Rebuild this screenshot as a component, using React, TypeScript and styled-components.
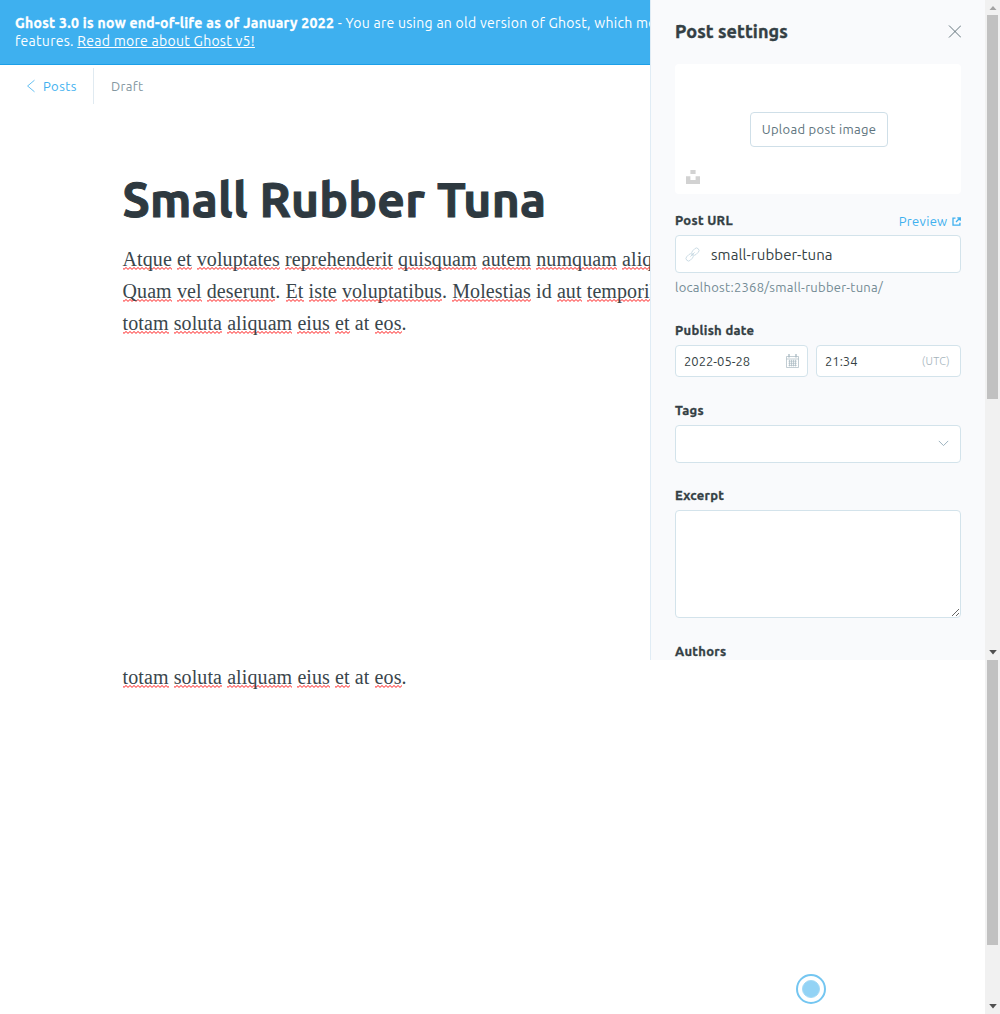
import React from "react";
import styled, { createGlobalStyle } from "styled-components";

const GlobalStyle = createGlobalStyle`
  *, *::before, *::after { box-sizing: border-box; }
  body {
    margin: 0;
    background: #fff;
    color: #343f44;
    font-family: Ubuntu, "Open Sans", "Noto Sans", sans-serif;
    font-size: 13px;
    line-height: 16px;
    letter-spacing: 0.3px;
  }
`;

const Page = styled.div`
  display: flex;
  flex-direction: column;
  width: 1000px;
  height: 1014px;
  overflow: hidden;
`;

const Screen = styled.div<{ $height: number }>`
  display: flex;
  height: ${(p) => p.$height}px;
  overflow: hidden;
`;

const Main = styled.main`
  flex: 1;
  min-width: 0;
  overflow: hidden;
`;

const Banner = styled.div`
  height: 65px;
  padding: 14px 15px;
  border-bottom: 1px solid #1c9fe8;
  background: #3eb0ef;
  color: #fff;
  font-size: 14px;
  line-height: 18px;
  letter-spacing: 0.28px;
  white-space: nowrap;
`;

const BannerStrong = styled.b`
  letter-spacing: 0.3px;
  -webkit-text-stroke: 0.3px currentColor;
`;

const BannerLink = styled.a`
  color: inherit;
  text-decoration: underline;
`;

const EditorHeader = styled.header`
  display: flex;
  height: 39px;
  padding: 3px 0 0 26px;
`;

const BackLink = styled.a`
  display: flex;
  align-items: center;
  gap: 7px;
  width: 68px;
  border-right: 1px solid #e0eaf1;
  color: #3eb0ef;
  letter-spacing: 0.45px;
`;

const Status = styled.div`
  display: flex;
  align-items: center;
  padding-left: 17px;
  color: #8497a1;
`;

const Article = styled.article<{ $top: number }>`
  padding: ${(p) => p.$top}px 0 0 122.5px;
`;

const Title = styled.h1`
  margin: 0 0 14px;
  color: #2e3940;
  font-size: 48px;
  font-weight: 700;
  line-height: 60px;
  white-space: nowrap;
  -webkit-text-stroke: 1px currentColor;
`;

const Paragraph = styled.p`
  margin: 0;
  color: #3a464c;
  font-family: "Liberation Serif", serif;
  font-size: 20px;
  line-height: 32px;
  letter-spacing: 0.1px;
  white-space: nowrap;
`;

const Misspelled = styled.span`
  background: url("data:image/svg+xml,%3Csvg xmlns='http://www.w3.org/2000/svg' width='4' height='3'%3E%3Cpath d='M-1 .5L1 2.4L3 .5L5 2.4' fill='none' stroke='%23f22' stroke-width='1'/%3E%3C/svg%3E")
    left bottom / 4px 3px repeat-x;
`;

const Panel = styled.aside`
  display: flex;
  flex-direction: column;
  flex: none;
  width: 335px;
  padding: 0 24px;
  overflow: hidden;
  border-left: 1px solid #e0ecf5;
  background: #f9fafc;
`;

const PanelHeader = styled.div`
  display: flex;
  flex: none;
  align-items: center;
  justify-content: space-between;
  height: 62px;
  margin-bottom: 2px;
`;

const PanelTitle = styled.h4`
  margin: 0;
  font-size: 18px;
  font-weight: 700;
  line-height: 22px;
  letter-spacing: 0.1px;
  -webkit-text-stroke: 0.4px currentColor;
`;

const ImageDrop = styled.div`
  display: grid;
  flex: none;
  grid-template-rows: 1fr 35px 1fr;
  height: 130px;
  margin-bottom: 18px;
  border-radius: 4px;
  background: #fff;
`;

const UploadButton = styled.button`
  grid-row: 2;
  justify-self: center;
  width: 138px;
  margin-left: 2px;
  padding: 0;
  border: 1px solid #cfdfe8;
  border-radius: 4px;
  background: #fff;
  color: #5d737d;
  font: inherit;
  letter-spacing: inherit;
`;

const UnsplashMark = styled.div`
  display: flex;
  grid-row: 3;
  align-items: flex-end;
  padding: 0 0 10px 11px;
`;

const Field = styled.div<{ $gap: number }>`
  flex: none;
  margin-bottom: ${(p) => p.$gap}px;
`;

const LabelRow = styled.div`
  display: flex;
  justify-content: space-between;
  margin-bottom: 7px;
`;

const Label = styled.label`
  font-weight: 700;
  -webkit-text-stroke: 0.3px currentColor;
`;

const PreviewLink = styled.a`
  display: flex;
  align-items: center;
  gap: 4px;
  height: 18px;
  margin: 0 0.5px -2px 0;
  color: #3eb0ef;
`;

const InputBox = styled.div<{ $height: number; $width?: number }>`
  display: flex;
  align-items: center;
  justify-content: space-between;
  width: ${(p) => (p.$width ? `${p.$width}px` : "100%")};
  height: ${(p) => p.$height}px;
  padding: 0 8px;
  border: 1px solid #d3e3eb;
  border-radius: 4px;
  background: #fff;
`;

const UrlBox = styled(InputBox)`
  justify-content: flex-start;
  gap: 11px;
  padding-left: 9px;
  font-size: 15px;
  letter-spacing: 0.1px;
`;

const UrlValue = styled.span`
  padding-top: 2px;
`;

const SmallValue = styled.span`
  letter-spacing: 0;
`;

const Timezone = styled.span`
  padding-right: 2px;
  color: #a5b3bb;
  font-size: 11px;
  font-weight: 300;
`;

const Helper = styled.p`
  margin: 6px 0 0;
  color: #738a94;
  letter-spacing: 0.28px;
`;

const DateRow = styled.div`
  display: flex;
  gap: 8px;
`;

const ExcerptArea = styled.textarea`
  display: block;
  width: 100%;
  height: 108px;
  border: 1px solid #d3e3eb;
  border-radius: 4px;
  outline: none;
  background: #fff;
  resize: vertical;
`;

const Track = styled.div`
  display: flex;
  flex: none;
  flex-direction: column;
  width: 15px;
  padding: 0 2px;
  background: #f1f1f1;
`;

const ThumbBar = styled.div<{ $height: number }>`
  height: ${(p) => p.$height}px;
  background: #c1c1c1;
`;

const TrackEnd = styled.div<{ $bottom?: boolean }>`
  display: flex;
  justify-content: center;
  height: 15px;
  padding-top: 5px;
  margin-top: ${(p) => (p.$bottom ? "auto" : "0")};
`;

const Pointer = styled.div`
  position: absolute;
  left: 796px;
  top: 974px;
  display: grid;
  place-items: center;
  width: 30px;
  height: 30px;
  border: 2px solid #74c6f1;
  border-radius: 50%;
  background: #fff;

  &::after {
    content: "";
    width: 18px;
    height: 18px;
    border: 1px solid #a3daf6;
    border-radius: 50%;
    background: #93d3f5;
  }
`;

function Scrollbar({ top, thumb }: { top: boolean; thumb: number }) {
  return (
    <Track>
      {top && (
        <TrackEnd>
          <svg width="8" height="5" viewBox="0 0 8 5">
            <path d="M0.5 5L4 1l3.5 4z" fill="#a3a3a3" />
          </svg>
        </TrackEnd>
      )}
      <ThumbBar $height={thumb} />
      <TrackEnd $bottom>
        <svg width="8" height="5" viewBox="0 0 8 5">
          <path d="M0.2 0h7.6L4 4.5z" fill="#505050" />
        </svg>
      </TrackEnd>
    </Track>
  );
}

function Prose({ text }: { text: string }) {
  const known = ["id", "at"];
  return (
    <>
      {text.split(" ").map((word, i) => {
        const body = word.replace(/\.$/, "");
        return (
          <React.Fragment key={i}>
            {i > 0 && " "}
            {known.includes(body) ? body : <Misspelled>{body}</Misspelled>}
            {word !== body && "."}
          </React.Fragment>
        );
      })}
    </>
  );
}

const LAST_LINE = "totam soluta aliquam eius et at eos.";

export default function App() {
  return (
    <Page>
      <GlobalStyle />
      <Screen $height={660}>
        <Main>
          <Banner>
            <BannerStrong>Ghost 3.0 is now end-of-life as of January 2022</BannerStrong> - You are using an old
            version of Ghost, which means
            <br />
            features. <BannerLink>Read more about Ghost v5!</BannerLink>
          </Banner>
          <EditorHeader>
            <BackLink>
              <svg width="10" height="14" viewBox="0 0 10 14" fill="none" stroke="#3eb0ef" strokeWidth="0.8">
                <path d="M8.5 1.2L1.6 7l6.9 5.8" />
              </svg>
              Posts
            </BackLink>
            <Status>Draft</Status>
          </EditorHeader>
          <Article $top={65}>
            <Title>Small Rubber Tuna</Title>
            <Paragraph>
              <Prose text="Atque et voluptates reprehenderit quisquam autem numquam aliquam" />
              <br />
              <Prose text="Quam vel deserunt. Et iste voluptatibus. Molestias id aut temporibus" />
              <br />
              <Prose text={LAST_LINE} />
            </Paragraph>
          </Article>
        </Main>
        <Panel>
          <PanelHeader>
            <PanelTitle>Post settings</PanelTitle>
            <svg width="13" height="13" viewBox="0 0 13 13" stroke="#54666f" strokeWidth="0.9">
              <path d="M1 0.5l12 12M13 0.5l-12 12" />
            </svg>
          </PanelHeader>
          <ImageDrop>
            <UploadButton>Upload post image</UploadButton>
            <UnsplashMark>
              <svg width="14" height="14" viewBox="0 0 14 14" fill="#d2d2d2">
                <path d="M4.4 0h5.2v4H4.4zM0 6.2h4.4V10h5.2V6.2H14V14H0z" />
              </svg>
            </UnsplashMark>
          </ImageDrop>
          <Field $gap={27}>
            <LabelRow>
              <Label>Post URL</Label>
              <PreviewLink>
                Preview
                <svg width="9" height="9" viewBox="0 0 9 9" fill="none" stroke="#3eb0ef" strokeWidth="1.3">
                  <path d="M3.5 1.2H1v6.9h6.9V5.8M4 5l3.7-3.7M5.3 0.8h3v3" />
                </svg>
              </PreviewLink>
            </LabelRow>
            <UrlBox $height={38}>
              <svg width="15" height="15" viewBox="0 0 15 15" fill="none" stroke="#c3d6e0" strokeWidth="0.8">
                <g transform="rotate(-45 7.5 7.5)">
                  <rect x="-0.6" y="5" width="8" height="5" rx="2.5" />
                  <rect x="7.6" y="5" width="8" height="5" rx="2.5" />
                  <path d="M4.5 7.5h6" />
                </g>
              </svg>
              <UrlValue>small-rubber-tuna</UrlValue>
            </UrlBox>
            <Helper>localhost:2368/small-rubber-tuna/</Helper>
          </Field>
          <Field $gap={25}>
            <LabelRow>
              <Label>Publish date</Label>
            </LabelRow>
            <DateRow>
              <InputBox $height={32} $width={133}>
                <SmallValue>2022-05-28</SmallValue>
                <svg width="13" height="14" viewBox="0 0 13 14" fill="none" stroke="#a9b9c2" strokeWidth="0.7">
                  <path d="M0.5 2.5h12v11H0.5zM0.5 5h12M2.5 7.2h8.2M2.5 9.3h8.2M2.5 11.4h8.2M3.5 5.8v6.6M5.5 5.8v6.6M7.5 5.8v6.6M9.5 5.8v6.6" />
                  <path d="M3 0v3.4M10 0v3.4" strokeWidth="1.3" />
                </svg>
              </InputBox>
              <InputBox $height={32} $width={145}>
                <SmallValue>21:34</SmallValue>
                <Timezone>(UTC)</Timezone>
              </InputBox>
            </DateRow>
          </Field>
          <Field $gap={24}>
            <LabelRow>
              <Label>Tags</Label>
            </LabelRow>
            <InputBox $height={38}>
              <span />
              <svg width="18" height="8" viewBox="0 0 18 8" fill="none" stroke="#9db3bf" strokeWidth="1">
                <path d="M4.8 0.9l4.7 4.7 4.7-4.7" />
              </svg>
            </InputBox>
          </Field>
          <Field $gap={25}>
            <LabelRow>
              <Label>Excerpt</Label>
            </LabelRow>
            <ExcerptArea />
          </Field>
          <Field $gap={0}>
            <Label>Authors</Label>
          </Field>
        </Panel>
        <Scrollbar top thumb={384} />
      </Screen>
      <Screen $height={354}>
        <Main>
          <Article $top={1}>
            <Paragraph>
              <Prose text={LAST_LINE} />
            </Paragraph>
          </Article>
        </Main>
        <Scrollbar top={false} thumb={285} />
      </Screen>
      <Pointer />
    </Page>
  );
}
